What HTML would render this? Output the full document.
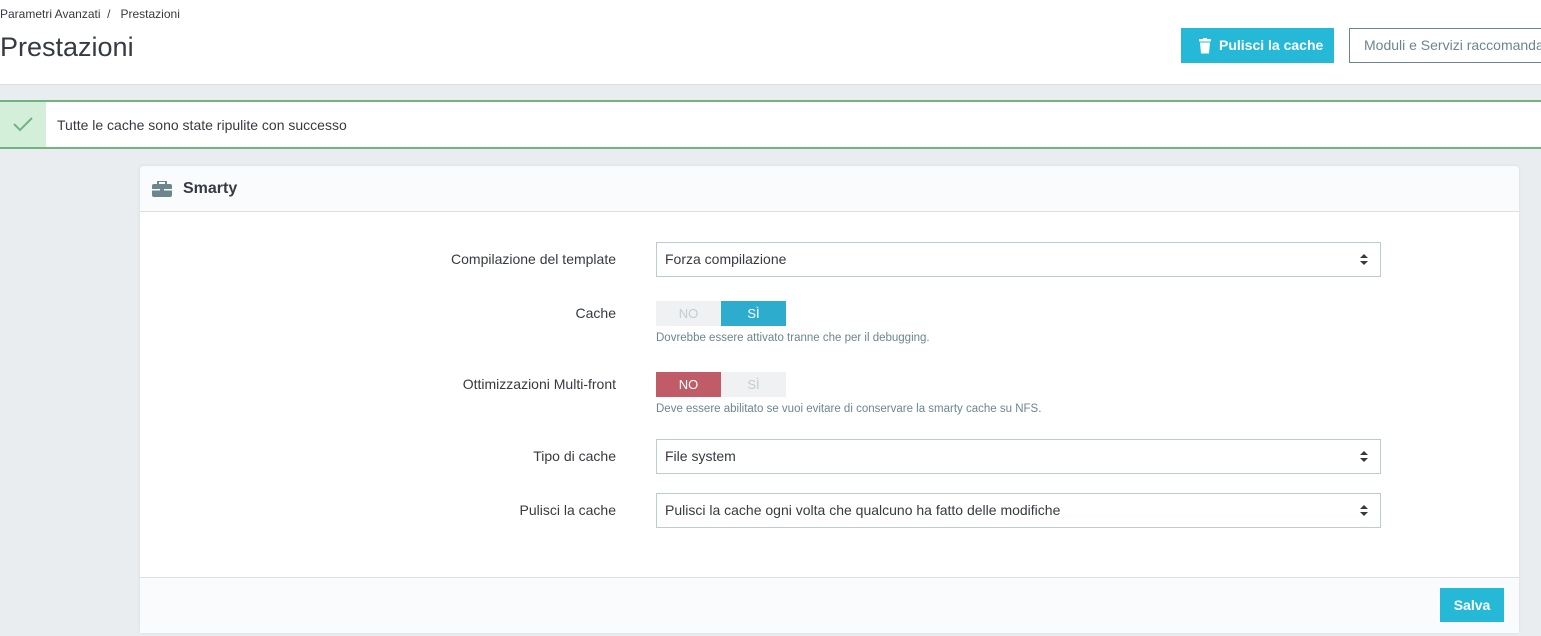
<!DOCTYPE html>
<html><head><meta charset="utf-8"><style>
*{box-sizing:border-box;margin:0;padding:0}
body{width:1541px;height:636px;overflow:hidden;background:#eaedf0;font-family:"Liberation Sans",sans-serif;color:#363a41;position:relative}
.hdr{position:absolute;left:0;top:0;width:1541px;height:85px;background:#fff;border-bottom:1px solid #dbe0e3}
.bc{position:absolute;left:0;top:7px;font-size:12px;color:#363a41}
h1{position:absolute;left:0;top:32px;font-size:27px;font-weight:normal;color:#363a41}
.b1{position:absolute;left:1181px;top:28px;width:153px;height:35px;background:#25b9d7;color:#fff;font-weight:bold;font-size:14px;line-height:35px;padding-left:38px}
.b2{position:absolute;left:1349px;top:28px;width:200px;height:35px;border:1px solid #6c868e;color:#6c868e;font-size:14px;line-height:33px;padding-left:14px;background:#fff;white-space:nowrap}
.alert{position:absolute;left:0;top:100px;width:1541px;height:49px;background:#fff;border-top:2px solid #70b580;border-bottom:2px solid #70b580}
.alert .ic{position:absolute;left:0;top:0;width:46px;height:45px;background:#d4efd9}
.alert span{position:absolute;left:57px;top:15px;font-size:14px}
.panel{position:absolute;left:140px;top:166px;width:1379px;height:467px;background:#fff;border-radius:4px;box-shadow:0 0 3px #d5d9dc}
.ph{height:46px;background:#fafbfc;border-bottom:1px solid #dbe0e3;border-radius:4px 4px 0 0;font-size:16px;font-weight:bold;line-height:46px;padding-left:43px;position:relative}
.pf{position:absolute;left:0;top:411px;width:1379px;height:56px;background:#fafbfc;border-top:1px solid #dbe0e3}
.salva{position:absolute;left:1300px;top:10px;width:64px;height:34px;background:#25b9d7;color:#fff;font-weight:bold;font-size:14px;line-height:34px;text-align:center}
.lbl{position:absolute;right:903px;font-size:14px;text-align:right;white-space:nowrap}
.sel{position:absolute;left:516px;width:725px;height:35px;border:1px solid #bbcdd2;font-size:14px;line-height:33px;padding-left:8px}
.sel:after{content:"";position:absolute;right:12px;top:11px;border:4px solid transparent;border-bottom:4px solid #363a41;border-top:none}
.sel:before{content:"";position:absolute;right:12px;top:18px;border:4px solid transparent;border-top:4px solid #363a41;border-bottom:none}
.sw{position:absolute;left:516px;width:130px;height:25px;font-size:13px;line-height:25px;display:flex}
.sw div{width:65px;text-align:center;background:#eff1f2;color:#c4cdd2}
.help{position:absolute;left:516px;font-size:11.5px;color:#6c868e}
</style></head><body>
<div class="hdr">
<div class="bc">Parametri Avanzati &nbsp;/ &nbsp; Prestazioni</div>
<h1>Prestazioni</h1>
<div class="b1"><svg style="position:absolute;left:18px;top:10px" width="12" height="16" viewBox="0 0 12 16"><rect x="0" y="1" width="12" height="2.5" fill="#fff"/><rect x="4" y="0" width="4" height="2" fill="#fff"/><path d="M1 4.5h10l-1 11H2z" fill="#fff"/></svg>Pulisci la cache</div>
<div class="b2">Moduli e Servizi raccomandati</div>
</div>
<div class="alert"><div class="ic"><svg style="position:absolute;left:13px;top:14px" width="20" height="16" viewBox="0 0 20 16"><path d="M1 8l6 6L19 2" stroke="#70b580" stroke-width="2" fill="none"/></svg></div><span>Tutte le cache sono state ripulite con successo</span></div>
<div class="panel">
<div class="ph"><svg style="position:absolute;left:12px;top:15px" width="20" height="16" viewBox="0 0 20 16"><rect x="6" y="0" width="8" height="4" rx="1" fill="none" stroke="#6c868e" stroke-width="2"/><rect x="0" y="3" width="20" height="13" rx="2" fill="#6c868e"/><rect x="0" y="8" width="20" height="1.5" fill="#fafbfc"/><rect x="8" y="7" width="4" height="3.5" fill="#6c868e"/></svg>Smarty</div>
<div class="lbl" style="top:85px">Compilazione del template</div>
<div class="sel" style="top:76px">Forza compilazione</div>
<div class="lbl" style="top:139px">Cache</div>
<div class="sw" style="top:135px"><div>NO</div><div style="background:#2eacce;color:#fff">SÌ</div></div>
<div class="help" style="top:166px">Dovrebbe essere attivato tranne che per il debugging.</div>
<div class="lbl" style="top:210px">Ottimizzazioni Multi-front</div>
<div class="sw" style="top:206px"><div style="background:#c05c67;color:#fff">NO</div><div>SÌ</div></div>
<div class="help" style="top:237px">Deve essere abilitato se vuoi evitare di conservare la smarty cache su NFS.</div>
<div class="lbl" style="top:282px">Tipo di cache</div>
<div class="sel" style="top:273px">File system</div>
<div class="lbl" style="top:336px">Pulisci la cache</div>
<div class="sel" style="top:327px">Pulisci la cache ogni volta che qualcuno ha fatto delle modifiche</div>
<div class="pf"><div class="salva">Salva</div></div>
</div>
</body></html>
